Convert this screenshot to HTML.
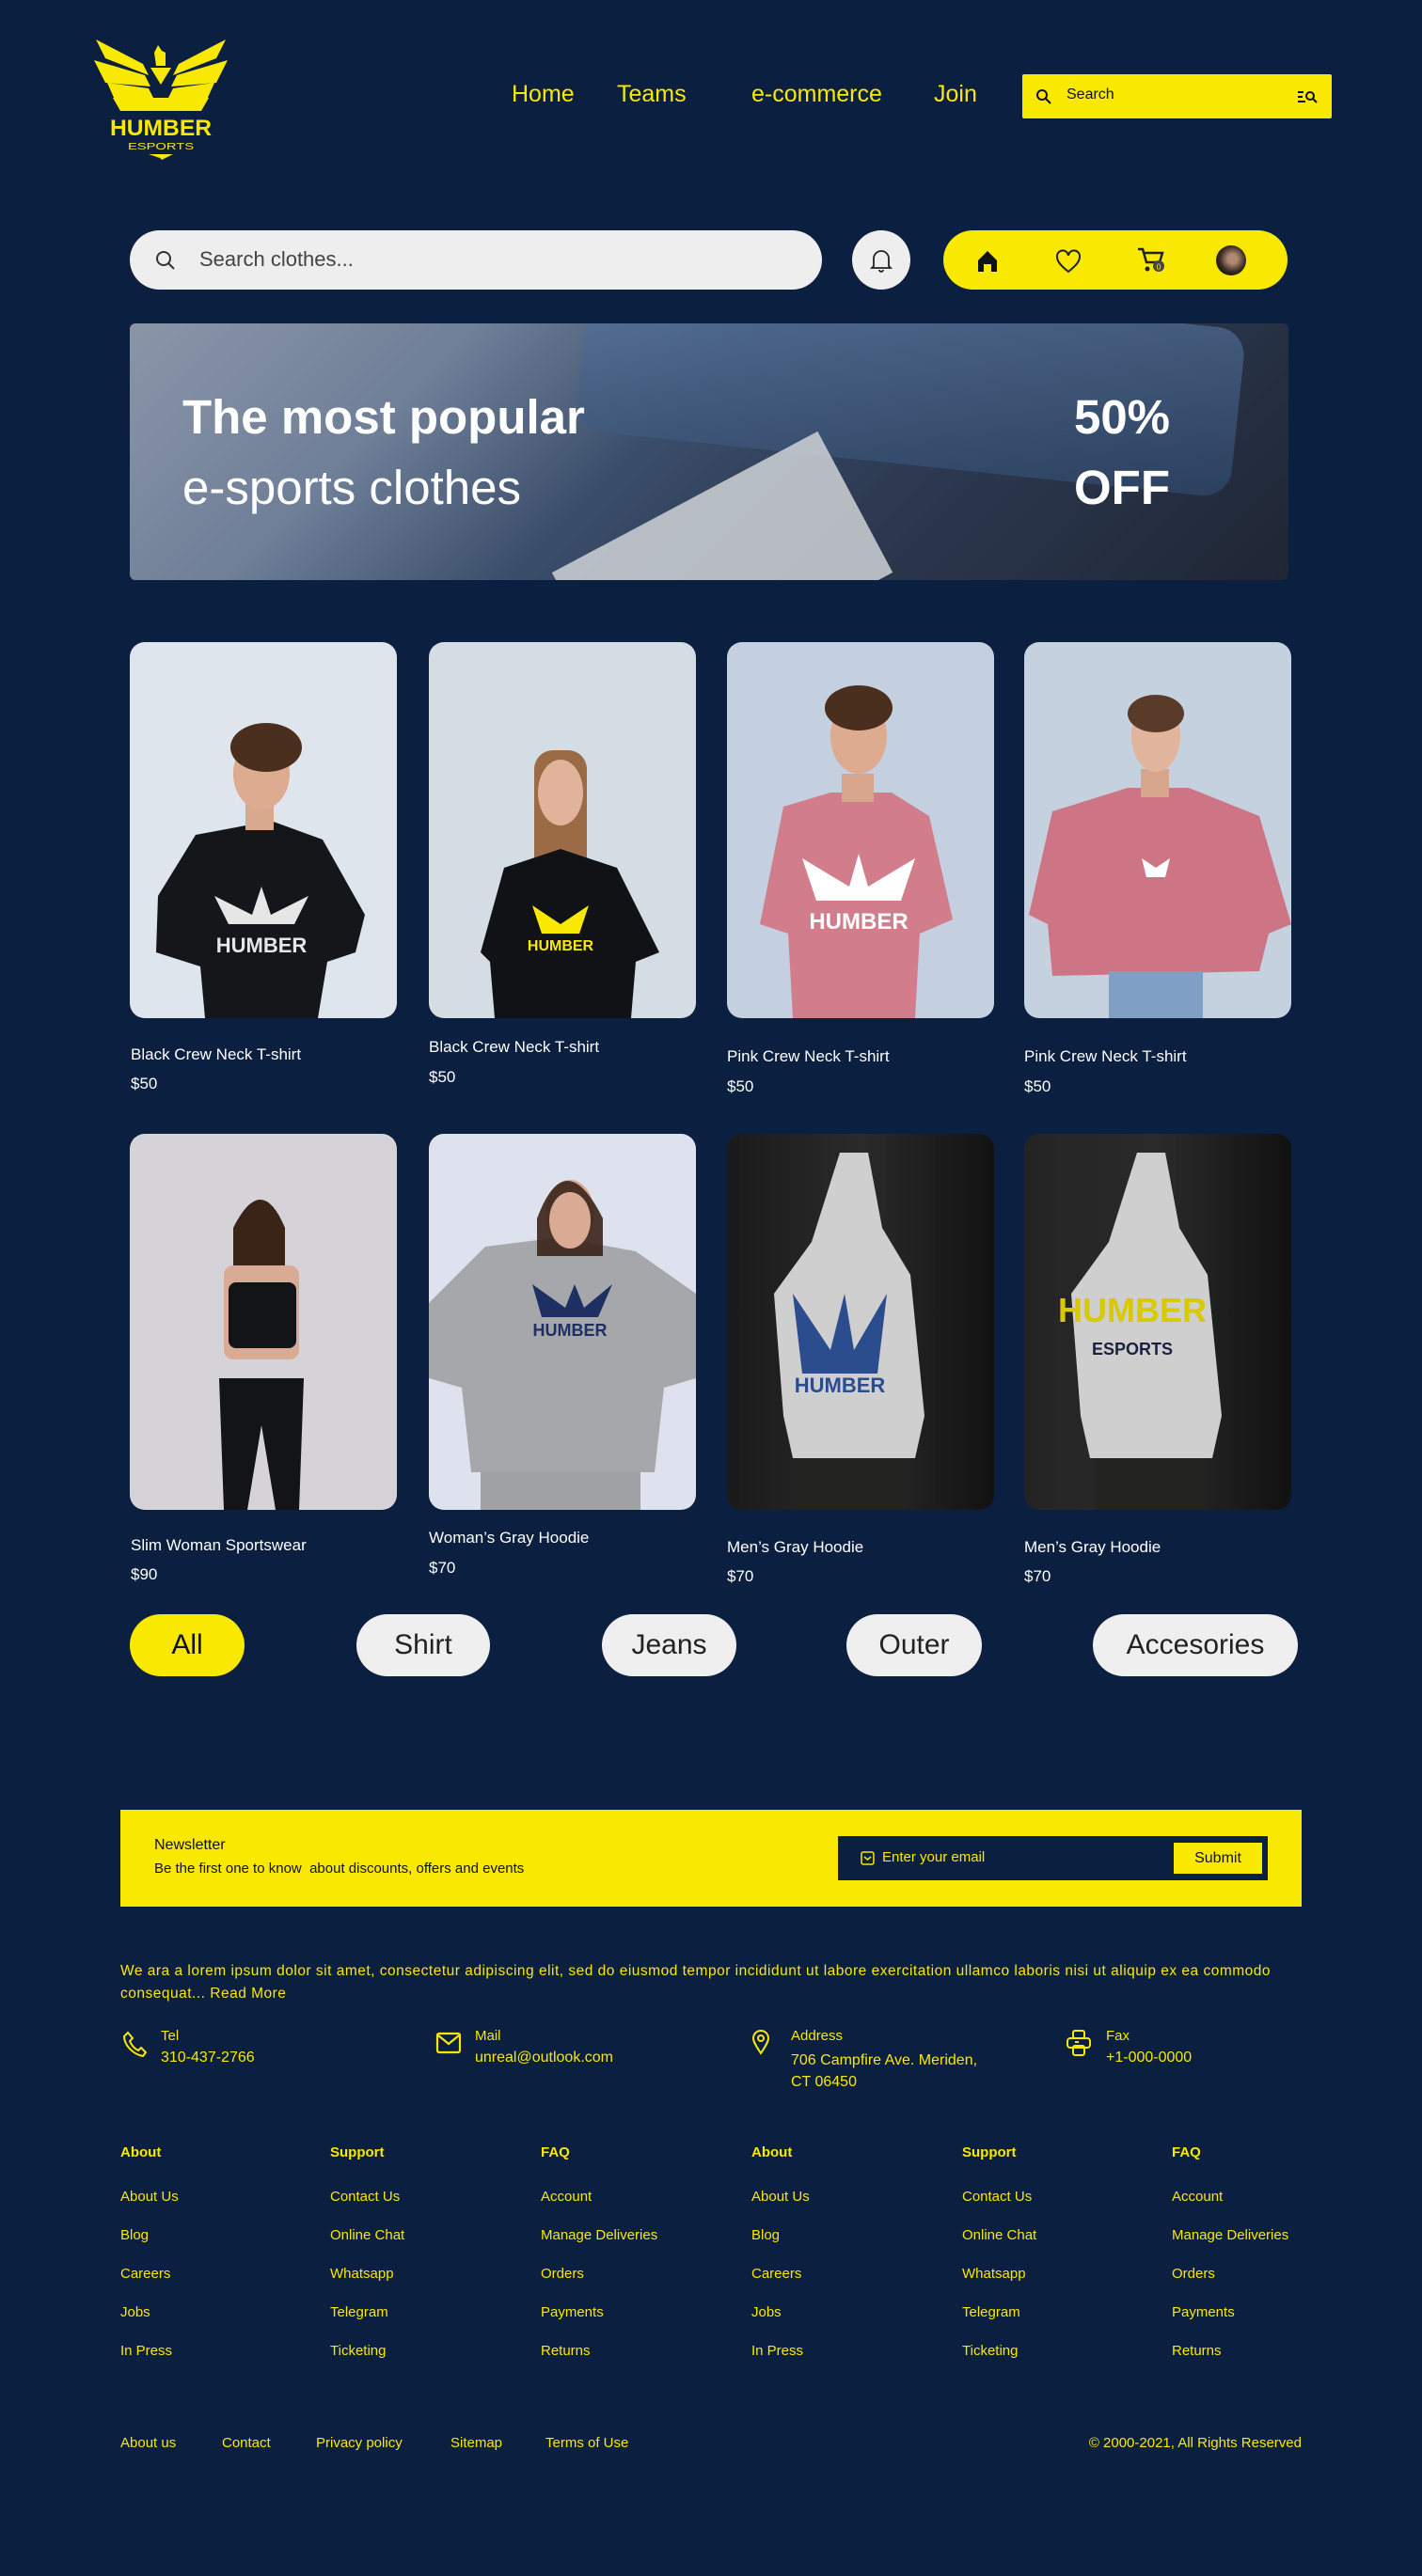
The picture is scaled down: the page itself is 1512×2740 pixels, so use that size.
<!DOCTYPE html>
<html><head><meta charset="utf-8">
<style>
*{margin:0;padding:0;box-sizing:border-box}
body{width:1512px;height:2740px;background:#0b1f40;font-family:"Liberation Sans",sans-serif;position:relative;overflow:hidden;color:#f9e900}
.a{position:absolute}
.nav{font-size:25px;color:#f9e900;top:86px}
.card{position:absolute;width:284px;height:400px;border-radius:16px;overflow:hidden}
.t{position:absolute;color:#fff;font-size:17px;white-space:nowrap}
.pill{position:absolute;top:1717px;height:66px;border-radius:33px;background:#efefef;color:#222;font-size:30px;text-align:center;line-height:66px}
.f{position:absolute;font-size:15px;color:#f9e900;white-space:nowrap}
.fh{font-weight:bold}
</style></head><body>

<svg class="a" style="left:100px;top:40px" width="142" height="130" viewBox="0 0 142 130">
<g fill="#f9e900">
<polygon points="2,2 52,28 58,40 12,22"/>
<polygon points="0,24 54,40 60,52 12,48"/>
<polygon points="14,48 58,54 64,66 22,66"/>
<polygon points="140,2 90,28 84,40 130,22"/>
<polygon points="142,24 88,40 82,52 130,48"/>
<polygon points="128,48 84,54 78,66 120,66"/>
<polygon points="64,16 68,8 72,14 76,16 76,30 66,30"/>
<polygon points="60,32 82,32 71,50"/>
<polygon points="20,64 122,64 114,78 28,78"/>
<text x="71" y="86" text-anchor="middle" font-family="Liberation Sans" font-weight="bold" font-size="24" textLength="108" lengthAdjust="spacingAndGlyphs" dy="0.75em">HUMBER</text>
<text x="71" y="116" text-anchor="middle" font-family="Liberation Sans" font-size="10" textLength="70" lengthAdjust="spacingAndGlyphs" dy="0.3em">ESPORTS</text>
<polygon points="58,124 84,124 72,130 70,128"/>
</g></svg>

<div class="a nav" style="left:544px">Home</div>
<div class="a nav" style="left:656px">Teams</div>
<div class="a nav" style="left:799px">e-commerce</div>
<div class="a nav" style="left:993px">Join</div>

<div class="a" style="left:1087px;top:79px;width:329px;height:47px;background:#f9e900;border-radius:2px">
<svg class="a" style="left:14px;top:15px" width="18" height="18" viewBox="0 0 18 18"><circle cx="7" cy="7" r="5" fill="none" stroke="#111" stroke-width="2"/><line x1="11" y1="11" x2="16" y2="16" stroke="#111" stroke-width="2"/></svg>
<div class="a" style="left:47px;top:13px;font-size:16px;color:#111">Search</div>
<svg class="a" style="left:292px;top:16px" width="22" height="16" viewBox="0 0 22 16"><path d="M1 3h6M1 8h5M1 13h8" stroke="#111" stroke-width="2"/><circle cx="14" cy="7" r="4" fill="none" stroke="#111" stroke-width="2"/><line x1="17" y1="10" x2="21" y2="14" stroke="#111" stroke-width="2"/></svg>
</div>

<div class="a" style="left:138px;top:245px;width:736px;height:63px;border-radius:32px;background:#eeeeee">
<svg class="a" style="left:26px;top:20px" width="24" height="24" viewBox="0 0 24 24"><circle cx="10" cy="10" r="7" fill="none" stroke="#333" stroke-width="2"/><line x1="15" y1="15" x2="21" y2="21" stroke="#333" stroke-width="2"/></svg>
<div class="a" style="left:74px;top:18px;font-size:22px;color:#444">Search clothes...</div>
</div>
<div class="a" style="left:906px;top:245px;width:62px;height:63px;border-radius:50%;background:#eeeeee">
<svg class="a" style="left:19px;top:18px" width="24" height="28" viewBox="0 0 24 28"><path d="M4 20V12a8 8 0 0 1 16 0v8l2 2H2z M10 24a2 2 0 0 0 4 0" fill="none" stroke="#222" stroke-width="1.8"/></svg>
</div>
<div class="a" style="left:1003px;top:245px;width:366px;height:63px;border-radius:32px;background:#f9e900">
<svg class="a" style="left:34px;top:20px" width="26" height="26" viewBox="0 0 26 26"><path d="M3 12L13 2l10 10v12h-6v-8h-8v8H3z" fill="#111"/></svg>
<svg class="a" style="left:119px;top:20px" width="28" height="26" viewBox="0 0 28 26"><path d="M14 24C4 16 2 12 2 8a6 6 0 0 1 12-1 6 6 0 0 1 12 1c0 4-2 8-12 16z" fill="none" stroke="#222" stroke-width="2"/></svg>
<svg class="a" style="left:205px;top:16px" width="32" height="32" viewBox="0 0 32 32"><path d="M2 4h5l4 14h14l3-10H9" fill="none" stroke="#222" stroke-width="2.5"/><circle cx="12" cy="25" r="2.5" fill="#222"/><circle cx="24" cy="22" r="6" fill="#444"/><text x="24" y="26" text-anchor="middle" font-size="9" fill="#f9e900" font-family="Liberation Sans">0</text></svg>
<div class="a" style="left:290px;top:16px;width:32px;height:32px;border-radius:50%;background:radial-gradient(circle at 55% 45%,#b08a70 20%,#3a2a22 55%,#111 80%)"></div>
</div>

<div class="a" style="left:138px;top:344px;width:1232px;height:273px;border-radius:6px;overflow:hidden;background:linear-gradient(135deg,#8b95a8 0%,#6f7f98 25%,#3a4d6a 45%,#2d3a52 65%,#1f2634 100%)">
<div class="a" style="left:480px;top:-30px;width:700px;height:180px;background:linear-gradient(170deg,#5b789f,#2e4566);transform:rotate(6deg);border-radius:30px;opacity:.8"></div>
<div class="a" style="left:470px;top:180px;width:320px;height:170px;background:#cfd2d6;transform:rotate(-28deg);opacity:.85"></div>
<div class="a" style="left:56px;top:62px;font-size:51px;color:#fff;font-weight:bold;line-height:75px">The most popular<br><span style="font-weight:normal">e-sports clothes</span></div>
<div class="a" style="left:990px;top:62px;font-size:51px;color:#fff;font-weight:bold;line-height:75px;text-align:center;width:130px">50%<br>OFF</div>
</div>

<!-- row1 -->
<div class="card" style="left:138px;top:683px;background:#dfe5ec">
<svg width="284" height="400" viewBox="0 0 284 400"><polygon points="30,270 70,205 150,190 205,210 250,290 240,330 210,340 200,400 80,400 75,345 28,330" fill="#141619"/><rect x="123" y="170" width="30" height="30" fill="#d9a98e"/><ellipse cx="140" cy="140" rx="30" ry="38" fill="#dcab90"/><ellipse cx="145" cy="112" rx="38" ry="26" fill="#4a2e1e"/><polygon points="90,270 130,290 140,260 150,290 190,270 175,300 105,300" fill="#e6e6e6"/><text x="140" y="330" text-anchor="middle" font-size="22" font-weight="bold" fill="#e6e6e6" font-family="Liberation Sans">HUMBER</text></svg></div>
<div class="card" style="left:456px;top:683px;background:#d5dde4">
<svg width="284" height="400" viewBox="0 0 284 400"><rect x="112" y="115" width="56" height="150" rx="20" fill="#9b6b45"/><polygon points="55,330 80,240 140,220 200,240 245,330 220,340 215,400 70,400 65,340" fill="#111216"/><ellipse cx="140" cy="160" rx="24" ry="35" fill="#e0b39a"/><polygon points="110,280 140,300 170,280 160,310 120,310" fill="#f9e900"/><text x="140" y="328" text-anchor="middle" font-size="16" font-weight="bold" fill="#f9e900" font-family="Liberation Sans">HUMBER</text></svg></div>
<div class="card" style="left:773px;top:683px;background:#c4d0df">
<svg width="284" height="400" viewBox="0 0 284 400"><polygon points="35,300 60,175 110,160 175,160 215,185 240,295 205,310 200,400 70,400 65,310" fill="#d27d8c"/><rect x="122" y="140" width="34" height="30" fill="#d7a58c"/><ellipse cx="140" cy="100" rx="30" ry="40" fill="#dcab90"/><ellipse cx="140" cy="70" rx="36" ry="24" fill="#4a2e1e"/><polygon points="80,230 130,260 140,225 150,260 200,230 185,275 95,275" fill="#fff"/><text x="140" y="305" text-anchor="middle" font-size="24" font-weight="bold" fill="#fff" font-family="Liberation Sans">HUMBER</text></svg></div>
<div class="card" style="left:1089px;top:683px;background:#c6d1df">
<svg width="284" height="400" viewBox="0 0 284 400"><polygon points="5,290 30,180 110,155 175,155 250,185 284,300 260,310 250,350 30,355 25,300" fill="#cd7585"/><rect x="90" y="350" width="100" height="50" fill="#7f9fc4"/><rect x="124" y="135" width="30" height="30" fill="#d7a58c"/><ellipse cx="140" cy="100" rx="26" ry="38" fill="#e1b49c"/><ellipse cx="140" cy="76" rx="30" ry="20" fill="#5a3a28"/><polygon points="125,230 140,240 155,230 150,250 130,250" fill="#fff"/></svg></div>

<div class="t" style="left:139px;top:1112px">Black Crew Neck T-shirt</div><div class="t" style="left:139px;top:1143px">$50</div>
<div class="t" style="left:456px;top:1104px">Black Crew Neck T-shirt</div><div class="t" style="left:456px;top:1136px">$50</div>
<div class="t" style="left:773px;top:1114px">Pink Crew Neck T-shirt</div><div class="t" style="left:773px;top:1146px">$50</div>
<div class="t" style="left:1089px;top:1114px">Pink Crew Neck T-shirt</div><div class="t" style="left:1089px;top:1146px">$50</div>

<!-- row2 -->
<div class="card" style="left:138px;top:1206px;background:#d5d3d8">
<svg width="284" height="400" viewBox="0 0 284 400"><ellipse cx="140" cy="115" rx="24" ry="32" fill="#d9a992"/><path d="M110 100q30-60 55 0v70h-55z" fill="#3a2418"/><rect x="100" y="140" width="80" height="100" rx="10" fill="#d9ab94"/><rect x="105" y="158" width="72" height="70" rx="8" fill="#121418"/><polygon points="95,260 185,260 180,400 155,400 140,310 125,400 100,400" fill="#121418"/></svg></div>
<div class="card" style="left:456px;top:1206px;background:#dde2ee">
<svg width="284" height="400" viewBox="0 0 284 400"><polygon points="0,180 60,120 140,110 220,125 284,170 284,260 250,270 240,360 45,360 35,270 0,260" fill="#a5a7aa"/><rect x="55" y="360" width="170" height="40" fill="#9fa1a4"/><ellipse cx="150" cy="85" rx="26" ry="36" fill="#d9ab94"/><path d="M115 90q30-80 70 0v40h-70z" fill="#3a2418" opacity=".9"/><ellipse cx="150" cy="92" rx="22" ry="30" fill="#d9ab94"/><polygon points="110,160 145,185 155,160 165,185 195,160 180,195 120,195" fill="#1d2f63"/><text x="150" y="215" text-anchor="middle" font-size="18" font-weight="bold" fill="#1d2f63" font-family="Liberation Sans">HUMBER</text></svg></div>
<div class="card" style="left:773px;top:1206px;background:linear-gradient(90deg,#1a1a1a,#2a2a2a 50%,#121212)">
<svg width="284" height="400" viewBox="0 0 284 400"><polygon points="50,170 90,115 120,20 150,20 165,100 195,150 210,300 200,345 70,345 60,300" fill="#cfcfcf"/><rect x="75" y="345" width="115" height="55" fill="#232320"/><polygon points="70,170 110,230 125,170 135,230 170,170 160,255 80,255" fill="#2b4d8e"/><text x="120" y="275" text-anchor="middle" font-size="22" font-weight="bold" fill="#2b4d8e" font-family="Liberation Sans">HUMBER</text></svg></div>
<div class="card" style="left:1089px;top:1206px;background:linear-gradient(90deg,#242424,#2a2a2a 50%,#111)">
<svg width="284" height="400" viewBox="0 0 284 400"><polygon points="50,170 90,115 120,20 150,20 165,100 195,150 210,300 200,345 70,345 60,300" fill="#cfcfcf"/><rect x="75" y="345" width="115" height="55" fill="#232320"/><text x="115" y="200" text-anchor="middle" font-size="36" font-weight="bold" fill="#d8c900" font-family="Liberation Sans">HUMBER</text><text x="115" y="235" text-anchor="middle" font-size="18" font-weight="bold" fill="#1a2040" font-family="Liberation Sans">ESPORTS</text></svg></div>

<div class="t" style="left:139px;top:1634px">Slim Woman Sportswear</div><div class="t" style="left:139px;top:1665px">$90</div>
<div class="t" style="left:456px;top:1626px">Woman’s Gray Hoodie</div><div class="t" style="left:456px;top:1658px">$70</div>
<div class="t" style="left:773px;top:1636px">Men’s Gray Hoodie</div><div class="t" style="left:773px;top:1667px">$70</div>
<div class="t" style="left:1089px;top:1636px">Men’s Gray Hoodie</div><div class="t" style="left:1089px;top:1667px">$70</div>

<div class="pill" style="left:138px;width:122px;background:#f9e900;color:#111">All</div>
<div class="pill" style="left:379px;width:142px">Shirt</div>
<div class="pill" style="left:640px;width:143px">Jeans</div>
<div class="pill" style="left:900px;width:144px">Outer</div>
<div class="pill" style="left:1162px;width:218px">Accesories</div>

<!-- newsletter -->
<div class="a" style="left:128px;top:1925px;width:1256px;height:103px;background:#f9e900">
<div class="a" style="left:36px;top:29px;font-size:16px;color:#111">Newsletter</div>
<div class="a" style="left:36px;top:54px;font-size:15px;color:#111">Be the first one to know&nbsp; about discounts, offers and events</div>
<div class="a" style="left:763px;top:28px;width:457px;height:47px;background:#0b1f40">
<svg class="a" style="left:24px;top:16px" width="15" height="15" viewBox="0 0 15 15"><rect x="1" y="1" width="13" height="13" rx="2" fill="none" stroke="#f9e900" stroke-width="1.5"/><path d="M4 6l3.5 3L11 6" fill="none" stroke="#f9e900" stroke-width="1.5"/></svg>
<div class="a" style="left:47px;top:14px;font-size:15px;color:#f9e900">Enter your email</div>
<div class="a" style="left:357px;top:7px;width:94px;height:33px;background:#f9e900;color:#111;font-size:16px;text-align:center;line-height:33px">Submit</div>
</div></div>

<div class="f" style="left:128px;top:2085px;font-size:15.5px;line-height:24px;letter-spacing:0.5px">We ara a lorem ipsum dolor sit amet, consectetur adipiscing elit, sed do eiusmod tempor incididunt ut labore exercitation ullamco laboris nisi ut aliquip ex ea commodo<br>consequat... Read More</div>

<svg class="a" style="left:130px;top:2160px" width="26" height="28" viewBox="0 0 26 28"><path d="M6 2l5 6-3 3c2 5 5 8 9 10l3-3 5 5-3 4C11 25 2 15 2 6z" fill="none" stroke="#f9e900" stroke-width="2"/></svg>
<div class="f" style="left:171px;top:2157px">Tel</div><div class="f" style="left:171px;top:2180px;font-size:16px">310-437-2766</div>
<svg class="a" style="left:463px;top:2161px" width="28" height="24" viewBox="0 0 28 24"><rect x="2" y="2" width="24" height="20" rx="2" fill="none" stroke="#f9e900" stroke-width="2.2"/><path d="M3 4l11 9 11-9" fill="none" stroke="#f9e900" stroke-width="2.2"/></svg>
<div class="f" style="left:505px;top:2157px">Mail</div><div class="f" style="left:505px;top:2180px;font-size:16px">unreal@outlook.com</div>
<svg class="a" style="left:799px;top:2158px" width="20" height="28" viewBox="0 0 20 28"><path d="M10 26C4 17 2 13 2 10a8 8 0 0 1 16 0c0 3-2 7-8 16z" fill="none" stroke="#f9e900" stroke-width="2"/><circle cx="10" cy="10" r="3" fill="none" stroke="#f9e900" stroke-width="2"/></svg>
<div class="f" style="left:841px;top:2157px">Address</div><div class="f" style="left:841px;top:2180px;font-size:16px;line-height:23px">706 Campfire Ave. Meriden,<br>CT 06450</div>
<svg class="a" style="left:1133px;top:2158px" width="28" height="30" viewBox="0 0 28 30"><rect x="8" y="2" width="12" height="8" rx="2" fill="none" stroke="#f9e900" stroke-width="2"/><rect x="2" y="10" width="24" height="10" rx="3" fill="none" stroke="#f9e900" stroke-width="2"/><rect x="8" y="18" width="12" height="10" rx="2" fill="none" stroke="#f9e900" stroke-width="2"/><line x1="10" y1="14" x2="14" y2="14" stroke="#f9e900" stroke-width="2"/></svg>
<div class="f" style="left:1176px;top:2157px">Fax</div><div class="f" style="left:1176px;top:2180px;font-size:16px">+1-000-0000</div>

<div class="f fh" style="left:128px;top:2281px">About</div>
<div class="f fh" style="left:351px;top:2281px">Support</div>
<div class="f fh" style="left:575px;top:2281px">FAQ</div>
<div class="f fh" style="left:799px;top:2281px">About</div>
<div class="f fh" style="left:1023px;top:2281px">Support</div>
<div class="f fh" style="left:1246px;top:2281px">FAQ</div>

<div class="f" style="left:128px;top:2316px;line-height:41px">About Us<br>Blog<br>Careers<br>Jobs<br>In Press</div>
<div class="f" style="left:351px;top:2316px;line-height:41px">Contact Us<br>Online Chat<br>Whatsapp<br>Telegram<br>Ticketing</div>
<div class="f" style="left:575px;top:2316px;line-height:41px">Account<br>Manage Deliveries<br>Orders<br>Payments<br>Returns</div>
<div class="f" style="left:799px;top:2316px;line-height:41px">About Us<br>Blog<br>Careers<br>Jobs<br>In Press</div>
<div class="f" style="left:1023px;top:2316px;line-height:41px">Contact Us<br>Online Chat<br>Whatsapp<br>Telegram<br>Ticketing</div>
<div class="f" style="left:1246px;top:2316px;line-height:41px">Account<br>Manage Deliveries<br>Orders<br>Payments<br>Returns</div>

<div class="f" style="left:128px;top:2590px">About us</div>
<div class="f" style="left:236px;top:2590px">Contact</div>
<div class="f" style="left:336px;top:2590px">Privacy policy</div>
<div class="f" style="left:479px;top:2590px">Sitemap</div>
<div class="f" style="left:580px;top:2590px">Terms of Use</div>
<div class="f" style="right:128px;top:2590px">© 2000-2021, All Rights Reserved</div>
</body></html>
